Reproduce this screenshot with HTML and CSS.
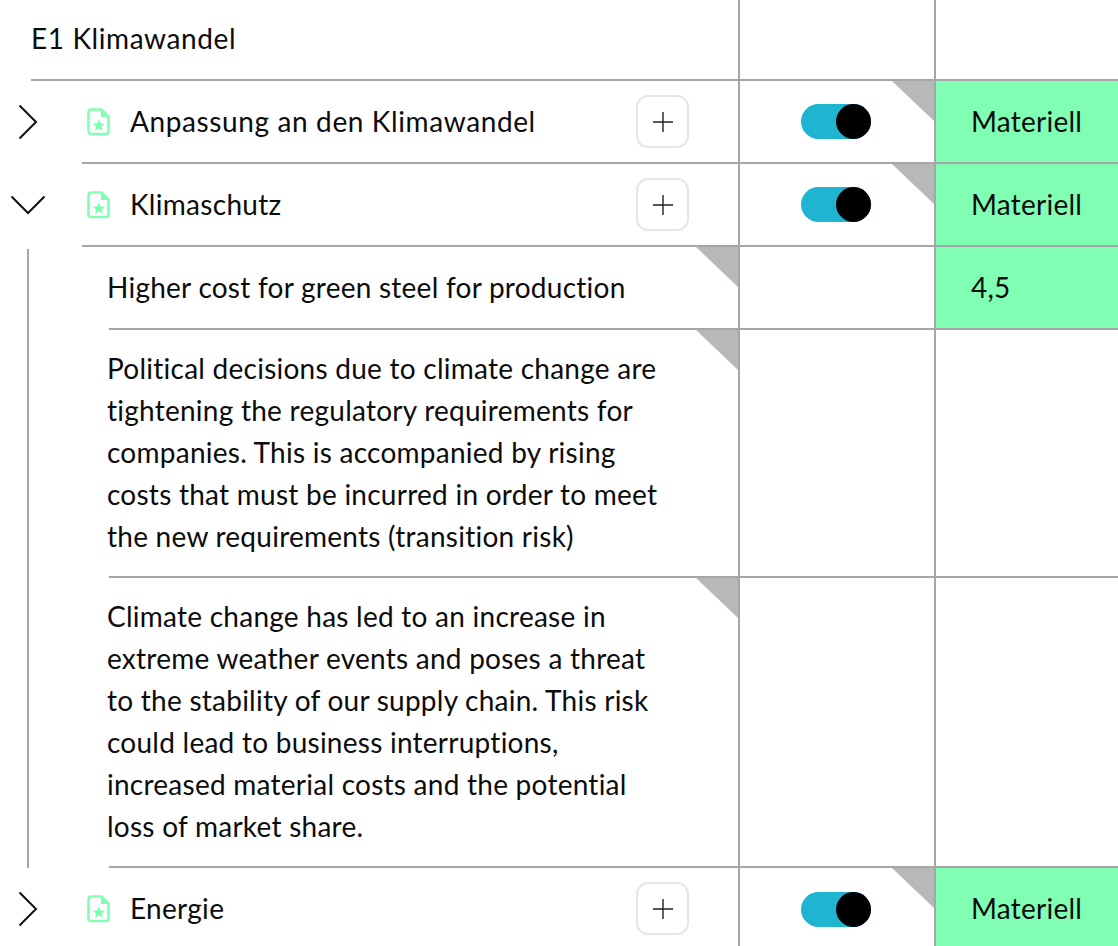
FILE: index.html
```html
<!DOCTYPE html>
<html lang="de">
<head>
<meta charset="utf-8">
<title>E1 Klimawandel</title>
<link rel="stylesheet" href="styles.css">
</head>
<body>
<svg class="defs" width="0" height="0" aria-hidden="true">
  <symbol id="file-star" viewBox="0 0 23 28">
    <path d="M4 1.500h10.500l7 7V23.500a2.500 2.500 0 0 1-2.500 2.500H4a2.500 2.500 0 0 1-2.500-2.500V4a2.500 2.500 0 0 1 2.500-2.500z" fill="none" stroke="#80ffb4" stroke-width="2.600"/>
    <path d="M14 1.500l7.500 7.500H14z" fill="#80ffb4"/>
    <path d="M11.800 11.500l1.700 3.800 4.300.4-3.200 2.800 1 4.200-3.800-2.200-3.800 2.200 1-4.200-3.200-2.800 4.300-.4z" fill="#80ffb4"/>
  </symbol>
  <symbol id="chev-right" viewBox="0 0 20 36">
    <path d="M1.500 1.500L18 18 1.500 34.500" fill="none" stroke="#111" stroke-width="2"/>
  </symbol>
  <symbol id="chev-down" viewBox="0 0 36 20">
    <path d="M1.500 1.500L18 18 34.500 1.500" fill="none" stroke="#111" stroke-width="2"/>
  </symbol>
  <symbol id="plus" viewBox="0 0 20 20">
    <path d="M0 10h20M10 0v20" fill="none" stroke="#222" stroke-width="1.400"/>
  </symbol>
</svg>

<main class="table">
  <div class="row row-head">
    <div class="cell-main"><div class="inner inner-head">E1 Klimawandel</div></div>
    <div class="cell-mid"></div>
    <div class="cell-end"></div>
  </div>

  <div class="row">
    <div class="cell-main">
      <div class="chev-box"><svg class="chev-r"><use href="#chev-right"/></svg></div>
      <div class="inner inner-topic">
        <svg class="file"><use href="#file-star"/></svg>
        <span class="label">Anpassung an den Klimawandel</span>
        <button class="add" type="button"><svg class="plus"><use href="#plus"/></svg></button>
      </div>
    </div>
    <div class="cell-mid has-corner"><span class="toggle"><span class="knob"></span></span></div>
    <div class="cell-end green"><span class="status">Materiell</span></div>
  </div>

  <div class="row">
    <div class="cell-main">
      <div class="chev-box"><svg class="chev-d"><use href="#chev-down"/></svg></div>
      <div class="inner inner-topic">
        <svg class="file"><use href="#file-star"/></svg>
        <span class="label label-short">Klimaschutz</span>
        <button class="add" type="button"><svg class="plus"><use href="#plus"/></svg></button>
      </div>
    </div>
    <div class="cell-mid has-corner"><span class="toggle"><span class="knob"></span></span></div>
    <div class="cell-end green"><span class="status">Materiell</span></div>
  </div>

  <div class="group">
    <div class="rule"></div>
    <div class="row">
      <div class="cell-main has-corner"><div class="inner inner-sub inner-single"><p class="sub-text">Higher cost for green steel for production</p></div></div>
      <div class="cell-mid"></div>
      <div class="cell-end green"><span class="status">4,5</span></div>
    </div>
    <div class="row">
      <div class="cell-main has-corner"><div class="inner inner-sub"><p class="sub-text">Political decisions due to climate change are<br>tightening the regulatory requirements for<br>companies. This is accompanied by rising<br>costs that must be incurred in order to meet<br>the new requirements (transition risk)</p></div></div>
      <div class="cell-mid"></div>
      <div class="cell-end"></div>
    </div>
    <div class="row">
      <div class="cell-main has-corner"><div class="inner inner-sub"><p class="sub-text">Climate change has led to an increase in<br>extreme weather events and poses a threat<br>to the stability of our supply chain. This risk<br>could lead to business interruptions,<br>increased material costs and the potential<br>loss of market share.</p></div></div>
      <div class="cell-mid"></div>
      <div class="cell-end"></div>
    </div>
  </div>

  <div class="row row-last">
    <div class="cell-main">
      <div class="chev-box"><svg class="chev-r"><use href="#chev-right"/></svg></div>
      <div class="inner inner-topic">
        <svg class="file"><use href="#file-star"/></svg>
        <span class="label label-short">Energie</span>
        <button class="add" type="button"><svg class="plus"><use href="#plus"/></svg></button>
      </div>
    </div>
    <div class="cell-mid has-corner"><span class="toggle"><span class="knob"></span></span></div>
    <div class="cell-end green"><span class="status">Materiell</span></div>
  </div>
</main>
</body>
</html>
```
FILE: styles.css
```css
* { box-sizing: border-box; }
html, body { margin: 0; padding: 0; height: 100%; overflow: hidden; background: #fff; }
body { font-family: "Lato", "Noto Sans", sans-serif; font-size: 28px; line-height: 42px; color: #0c0c0c; font-variant-ligatures: none; letter-spacing: 0.25px; }
.defs { position: absolute; }
.table { width: 1118px; }
.row { display: grid; grid-template-columns: 738px 198px 182px; }
.row-head { height: 81px; }
.cell-main { position: relative; display: flex; min-width: 0; }
.cell-mid { position: relative; display: flex; align-items: center; justify-content: center; border-left: 2px solid #a6a6a6; border-bottom: 2px solid #a6a6a6; border-right: 2px solid #a6a6a6; }
.cell-end { display: flex; align-items: center; padding-left: 36px; border-bottom: 2px solid #a6a6a6; }
.status { margin-bottom: 2px; margin-left: -1px; }
.green { background: #80ffb4; }
.inner { flex: 1; border-bottom: 2px solid #a6a6a6; }
.inner-head { margin-left: 31px; padding-top: 17px; letter-spacing: 0.6px; }
.chev-box { width: 82px; flex: none; display: flex; align-items: center; }
.chev-r { width: 20px; height: 36px; margin-left: 18px; margin-bottom: 2px; }
.chev-d { width: 36px; height: 20px; margin-left: 10px; margin-bottom: 2px; }
.inner-topic { height: 83px; display: flex; align-items: center; }
.file { width: 23px; height: 28px; margin-left: 5px; flex: none; }
.label { margin-left: 20px; margin-bottom: 2px; flex: 1; letter-spacing: 0.62px; }
.label-short { letter-spacing: 0.3px; }
.add { width: 53px; height: 53px; margin-right: 49px; padding: 0; display: flex; align-items: center; justify-content: center; background: #fff; border: 2px solid #e6e6e6; border-radius: 12px; }
.plus { width: 20px; height: 20px; }
.toggle { display: block; width: 70px; height: 35px; margin-left: -3px; border-radius: 18px; background: #1fb5d0; position: relative; }
.knob { position: absolute; right: 0; top: 0; width: 35px; height: 35px; border-radius: 50%; background: #000; }
.has-corner::after { content: ""; position: absolute; top: 0; right: 0; width: 42px; height: 40px; background: #b7b9b7; clip-path: polygon(0 0, 100% 0, 100% 100%); }
.group { position: relative; }
.rule { position: absolute; left: 27px; top: 2px; bottom: 0; width: 2px; background: #a6a6a6; }
.inner-sub { margin-left: 109px; padding: 17px 0 19px; }
.inner-single { padding: 19px 0 18px; height: 83px; }
.sub-text { margin: 0 0 0 -2px; }
.row-last .inner-topic { height: 81px; border-bottom: 0; }
.row-last .cell-mid, .row-last .cell-end { border-bottom: 0; }
.row-last .chev-box { height: 83px; }
.row-last .toggle { margin-top: -1px; }
.row-last .status { margin-bottom: 4px; }
```
